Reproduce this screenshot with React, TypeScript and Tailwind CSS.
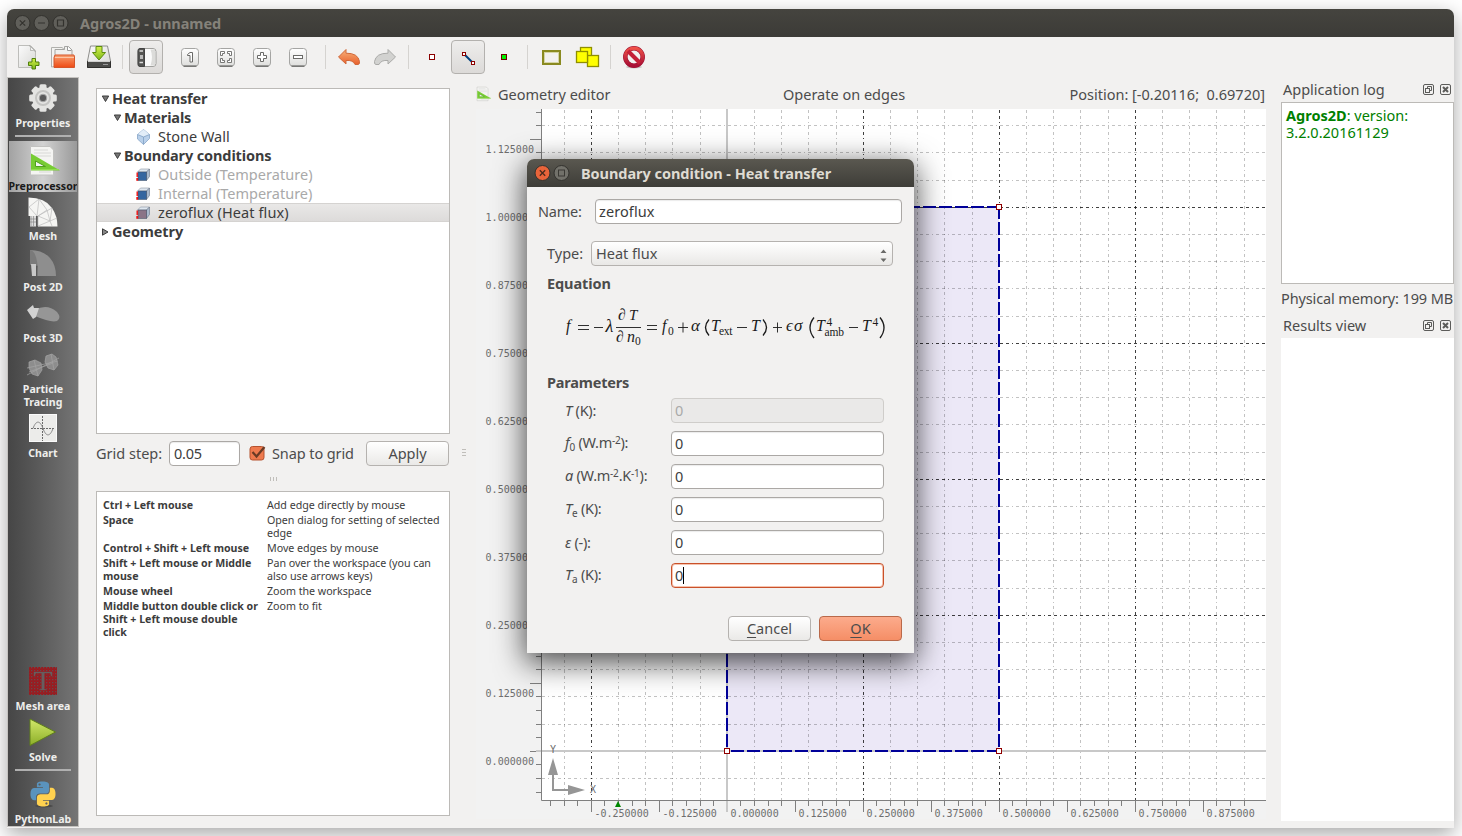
import React, { type ReactNode } from "react";

/* ---------- toolbar ---------- */

function ToolIcon({ children, className = "w-[36px]" }: { children: ReactNode; className?: string }) {
  return (
    <div className={`flex h-[34px] shrink-0 items-center justify-center ${className}`}>
      <svg width="34" height="34" viewBox="-17 -17 34 34">{children}</svg>
    </div>
  );
}

function Pressed({ children, className }: { children: ReactNode; className: string }) {
  return (
    <div className={`flex h-[34px] w-[34px] shrink-0 items-center justify-center rounded-[4px] border border-[#b3b1ae] bg-gradient-to-b from-[#eeedec] to-[#dcdad8] ${className}`}>
      <svg width="32" height="32" viewBox="-16 -16 32 32">{children}</svg>
    </div>
  );
}

function Divider({ className = "" }: { className?: string }) {
  return <div className={`mx-[5px] h-6 w-px shrink-0 bg-[#d5d3d0] ${className}`} />;
}

function Key({ children }: { children: ReactNode }) {
  return (
    <ToolIcon>
      <rect x="-8.5" y="-8.5" width="17" height="17.5" rx="3" fill="url(#key)" stroke="#a5a5a3" />
      <path d="M-6.5 9.2H6.5" stroke="#6f6f6d" strokeWidth="1.4" />
      {children}
    </ToolIcon>
  );
}

function Toolbar() {
  return (
    <div className="flex h-10 items-center pl-[4px]">
      <ToolIcon className="w-[34px]">
        <defs>
          <linearGradient id="key" x2="0" y2="1"><stop offset="0" stopColor="#fff" /><stop offset="1" stopColor="#dededc" /></linearGradient>
          <linearGradient id="paper" x2="1" y2="1"><stop offset="0" stopColor="#fbfbfb" /><stop offset="1" stopColor="#d8d8d6" /></linearGradient>
          <linearGradient id="folder" x2="0" y2="1"><stop offset="0" stopColor="#f9a070" /><stop offset="1" stopColor="#ee4a14" /></linearGradient>
          <linearGradient id="undo" x2="0" y2="1"><stop offset="0" stopColor="#f7b27a" /><stop offset="1" stopColor="#e8602c" /></linearGradient>
          <linearGradient id="no" x2="0" y2="1"><stop offset="0" stopColor="#ee5048" /><stop offset="1" stopColor="#a80f35" /></linearGradient>
          <linearGradient id="green" x2="0" y2="1"><stop offset="0" stopColor="#d5f04a" /><stop offset="1" stopColor="#7cb81a" /></linearGradient>
        </defs>
        <path d="M-9.5 -11.5H2.5L7.5 -6.5V10.5H-9.5Z" fill="url(#paper)" stroke="#bdbdba" />
        <path d="M1.5 -11.5Q3.500 -9.500 2.500 -6.500Q5.500 -7.500 7.5 -5.5Z" fill="#fff" stroke="#a5a5a2" strokeWidth=".8" />
        <path d="M4 1.500h3.500v3.500h3.500v3.500h-3.500v3.500h-3.500v-3.500H.5v-3.500h3.500Z" fill="url(#green)" stroke="#4f7f0c" />
      </ToolIcon>
      <ToolIcon>
        <path d="M-11.500 10V-9.500H-1L3 -6V8Z" fill="#f3f3f1" stroke="#b0b0ad" />
        <path d="M-8 8V-7.500H1.500V-10.500H5.500L9 -7V6Z" fill="#f0f0ee" stroke="#a5a5a2" />
        <path d="M4.500 -10.500V-6.500H8.500" fill="#fff" stroke="#999" />
        <path d="M-9 0.500L-8 -2H11L11.500 0V10.500H-9Z" fill="url(#folder)" stroke="#d5562a" />
        <path d="M-8 0.500H11" stroke="#fcc6a6" />
      </ToolIcon>
      <ToolIcon>
        <path d="M-8.500 -11H8.500L11.500 4V10.500H-11.500V4Z" fill="url(#paper)" stroke="#8e8e8b" />
        <path d="M-11.500 4.500H11.500V10.500H-11.500Z" fill="#4c4c4a" stroke="#2f2f2d" />
        <path d="M-11 4.500H11" stroke="#d0d0ce" />
        <path d="M4 7.500H9" stroke="#999" />
        <path d="M-3 -10.500H3V-4.500H6.500L0 3L-6.500 -4.500H-3Z" fill="url(#green)" stroke="#5c8c10" />
      </ToolIcon>
      <Divider className="mr-[6px]" />
      <Pressed className="mr-[9px]">
        <rect x="-8" y="-8.500" width="18" height="18" rx="3" fill="#fafafa" stroke="#a0a09d" />
        <path d="M-6 -8.500H-1.500V9.500H-6Q-8 9.500 -8 7.500V-6.500Q-8 -8.500 -6 -8.500Z" fill="#555553" stroke="#444" />
        <path d="M-6.500 -6H-3M-6.500 5.500H-3" stroke="#ddd" strokeWidth="1.500" />
        <rect x="-6" y="-2" width="3" height="4" fill="#bbb" />
        <path d="M4.500 -7.500H9V8.500H4.500Q7.500 0 4.500 -7.500" fill="#dcdcda" />
      </Pressed>
      <Key>
        <path d="M-2.500 -2.500L0 -4.500H2.500V5H0V-1.500H-2.500Z" fill="#fff" stroke="#6a6a68" />
      </Key>
      <Key>
        <path d="M-5.500 -1.500V-5.500H-1.500V-3.500H-3.500V-1.500ZM5.500 -1.500V-5.500H1.500V-3.500H3.500V-1.500ZM-5.500 1.500V5.500H-1.500V3.500H-3.500V1.500ZM5.500 1.500V5.500H1.500V3.500H3.500V1.500Z" fill="#fff" stroke="#6a6a68" strokeWidth=".9" />
      </Key>
      <Key>
        <path d="M-1.500 -4.500H1.500V-1.500H4.500V1.500H1.500V4.500H-1.500V1.500H-4.500V-1.500H-1.500Z" fill="#fff" stroke="#6a6a68" />
      </Key>
      <Key>
        <rect x="-4.500" y="-1.500" width="9" height="3" fill="#fff" stroke="#6a6a68" />
      </Key>
      <Divider className="ml-[9px]" />
      <ToolIcon>
        <path d="M-10.500 0L-3 -7.500V-3.800Q9 -4 10.500 4.500Q10.800 7.500 9 7.500H6Q4 2.800 -3 3.500V7Z" fill="url(#undo)" stroke="#d0683a" strokeLinejoin="round" />
      </ToolIcon>
      <ToolIcon>
        <path d="M10.500 0L3 -7.500V-3.800Q-9 -4 -10.500 4.500Q-10.800 7.500 -9 7.500H-6Q-4 2.800 3 3.500V7Z" fill="#d2d2d0" stroke="#aaaaa8" strokeLinejoin="round" />
      </ToolIcon>
      <Divider />
      <ToolIcon><rect x="-2.500" y="-2.500" width="5" height="5" fill="#fff" stroke="#8b0000" /></ToolIcon>
      <Pressed className="mx-px">
        <path d="M-4 -3L5 6" stroke="#00407f" strokeWidth="2" />
        <rect x="-5.500" y="-4.500" width="3" height="3" fill="#fff" stroke="#8b0000" />
        <rect x="3.500" y="4.500" width="3" height="3" fill="#fff" stroke="#8b0000" />
      </Pressed>
      <ToolIcon><rect x="-2.500" y="-2.500" width="5" height="5" fill="#00f000" stroke="#6b0000" /></ToolIcon>
      <Divider />
      <ToolIcon>
        <rect x="-8" y="-6" width="17" height="13" fill="#f2f1f0" stroke="#8a8a20" strokeWidth="2" />
        <rect x="-6.500" y="-4.500" width="14" height="10" fill="none" stroke="#d5d5a5" />
      </ToolIcon>
      <ToolIcon>
        <g fill="#ffff00" stroke="#8f8f00" strokeWidth="1.300">
          <rect x="-6.500" y="-9.500" width="11" height="10" />
          <rect x="0.500" y="-1.500" width="11" height="11" />
          <rect x="-10.500" y="-5.500" width="11" height="11" />
        </g>
      </ToolIcon>
      <Divider />
      <ToolIcon>
        <ellipse cx="0" cy="10" rx="8" ry="1.500" fill="#c8c6c4" />
        <circle r="8.700" fill="none" stroke="#9c1030" strokeWidth="4.500" />
        <circle r="8.700" fill="none" stroke="url(#no)" strokeWidth="3.500" />
        <path d="M-6 -6L6 6" stroke="#c42038" strokeWidth="4" />
      </ToolIcon>
    </div>
  );
}

/* ---------- mode bar ---------- */

function Mode({ label, children, className = "h-[51px] text-[#eeeeec]", low }: { label: ReactNode; children: ReactNode; className?: string; low?: boolean }) {
  return (
    <div className={`mx-px flex flex-col items-center overflow-hidden ${className}`}>
      <svg className="shrink-0" width="68" height={low ? 39 : 38} viewBox={low ? "-34 -20 68 39" : "-34 -20 68 38"}>{children}</svg>
      <div className="whitespace-nowrap text-center text-[10.600px] font-bold leading-[13px]">{label}</div>
    </div>
  );
}

const PY =
  "M14.25.18l.9.2.73.26.59.3.45.32.34.34.25.34.16.33.1.3.04.26.02.2-.01.13V8.5l-.05.63-.13.55-.21.46-.26.38-.3.31-.33.25-.35.19-.35.14-.33.1-.3.07-.26.04-.21.02H8.770l-.69.05-.59.14-.5.22-.41.27-.33.32-.27.35-.2.36-.15.37-.1.35-.07.32-.04.27-.02.21v3.060H3.170l-.21-.03-.28-.07-.32-.12-.35-.18-.36-.26-.36-.36-.35-.46-.32-.59-.28-.73-.21-.88-.14-1.050-.05-1.230.06-1.220.16-1.040.24-.87.32-.71.36-.57.4-.44.42-.33.42-.24.4-.16.36-.1.32-.05.24-.01h.16l.06.01h8.160v-.83H6.180l-.01-2.750-.02-.37.05-.34.11-.31.17-.28.25-.26.31-.23.38-.2.44-.18.51-.15.58-.12.64-.1.71-.06.77-.04.84-.02 1.270.05zm-6.300 1.980l-.23.33-.08.41.08.41.23.34.33.22.41.09.41-.09.33-.22.23-.34.08-.41-.08-.41-.23-.33-.33-.22-.41-.09-.41.09z";

function Ruler({ small }: { small?: boolean }) {
  return (
    <g transform={small ? "scale(.48)" : undefined}>
      <path d="M-12.500 -14.500H7L10.500 -11V14H-12.500Z" fill="#f4f4f2" stroke="#c2c2c0" />
      <path d="M-9 -11H5M-9 -8H8M-9 -5H8M-4 11H8M2 7H8" stroke="#d8d8d6" />
      <path d="M-12 -7.500V9.500H17Z" fill="#77cc33" />
      <path d="M-7.500 0V5.500H2.500Z" fill="#f4f4f2" stroke="#4f9f1d" />
      <path d="M-12 8.500H16" stroke="#8fdf4d" />
    </g>
  );
}

const TEETH = [0, 45, 90, 135];

function ModeBar() {
  return (
    <div className="flex h-[750px] w-[72px] shrink-0 flex-col border border-[#c4c2bf] bg-gradient-to-r from-[#464646] to-[#757575]">
      <Mode label="Properties" low className="h-[52px] text-[#eeeeec]">
        <g fill="#e4e4e2">
          {TEETH.map((a) => (
            <rect key={a} x="-3.500" y="-13.800" width="7" height="27.600" rx="1.500" transform={`rotate(${a})`} />
          ))}
          <circle r="11" />
        </g>
        <circle r="7" fill="none" stroke="#c4c4c2" strokeWidth="2" />
        <circle r="3.800" fill="#5a5a5a" stroke="#aaa" />
      </Mode>
      <div className="mx-[7px] mb-[4px] mt-[5px] h-[2px] bg-[#b0b0b0]" />
      <Mode className="h-[51px] bg-gradient-to-r from-[#a2a2a2] via-[#d2d2d2] to-[#999999] text-[#1a1a1a]" label="Preprocessor" low>
        <Ruler />
      </Mode>
      <Mode label="Mesh">
        <path d="M-14.500 -14.500Q2 -14.500 9 -4Q14.500 4 14.500 14.500H-5V4H-14.500Z" fill="#f5f5f3" />
        <path d="M-13 4V14.500H-7V4Z" fill="#ddd" />
        <path d="M-12 4V14M-9.500 4V14M-13 7H-7M-13 10H-7" stroke="#888" strokeWidth=".7" />
        <path d="M-14 -5L-4 -13L-6 4L-14 -5M-4 -13L4 -2L-5 4L9 -4L7 9L4 -2M7 9L-5 14L-5 4L7 9L14 6M7 9L9 14" fill="none" stroke="#bbb" strokeWidth=".7" />
      </Mode>
      <Mode label="Post 2D">
        <path d="M-13 -13Q0 -13 7 -5Q13 2 13 13H-5V3L-13 0Z" fill="#8e8e8e" />
        <path d="M-13 -13Q-5 -12 -5 13H-6V2H-13Z" fill="#7a7a7a" />
        <path d="M-12 1H-7V13H-11Z" fill="#c8c8c8" />
      </Mode>
      <Mode label="Post 3D">
        <path d="M-8 -4Q4 -11 14 -2Q19 4 14 7Q8 9 -8 2Z" fill="#969696" />
        <path d="M-16 -4L-10 -9L-9 -6H-4L-7 3L-10 5Z" fill="#d2d2d2" />
      </Mode>
      <Mode className="h-[64px] text-[#eeeeec]" label={<>Particle<br />Tracing</>}>
        <g fill="#8d8d8d" stroke="#a5a5a5" strokeWidth=".7">
          <path d="M-14 -3L-8 -5L-2 -2L-1 5L-5 11L-11 9L-14 3Z" />
          <path d="M3 -9L9 -11L13 -8L15 0L11 5L5 3L2 -3Z" />
          <path d="M-16 10L16 -7M-16 3L15 -4M-14 7L10 -2M-9 -5L-5 11M8 -11L11 5" fill="none" />
        </g>
      </Mode>
      <Mode label="Chart">
        <g transform="translate(0 -1)">
          <rect x="-13.500" y="-13.500" width="27" height="27" fill="#ececea" stroke="#fafafa" />
          <path d="M-12 .5H12M-.5 -12V13" stroke="#6a6a6a" strokeDasharray="2 1" />
          <path d="M-10 0.500C-7 -8 -3 -8 0 0.500S7 9 10 0.500" fill="none" stroke="#888" />
        </g>
      </Mode>
      <div className="flex-1" />
      <Mode label="Mesh area">
        <defs>
          <pattern id="noise" width="3" height="3" patternUnits="userSpaceOnUse">
            <rect width="3" height="3" fill="#a3151b" />
            <rect width="1.300" height="1.300" fill="#5c5050" />
            <rect x="1.600" y="1.600" width="1" height="1" fill="#6a3a3c" />
          </pattern>
        </defs>
        <rect x="-14" y="-15" width="28" height="28" fill="url(#noise)" />
        <path d="M-9.500 -10.500H9.500V-5.500H8L7 -8.500H1.800V7H4V8.500H-4V7H-1.800V-8.500H-7L-8 -5.500H-9.500Z" fill="#665e5f" stroke="#8f2024" strokeWidth=".6" />
      </Mode>
      <Mode label="Solve">
        <defs>
          <linearGradient id="solve" x2="0" y2="1"><stop offset="0" stopColor="#d2e86a" /><stop offset="1" stopColor="#8cae28" /></linearGradient>
        </defs>
        <path d="M-13 -14L12.500 -1L-13 12.500Z" fill="url(#solve)" stroke="#5f7f1a" />
      </Mode>
      <div className="mx-[7px] mb-[4px] mt-[5px] h-[2px] bg-[#b0b0b0]" />
      <Mode label="PythonLab">
        <ellipse cx="1" cy="11" rx="9" ry="1.500" fill="#4a4a4a" />
        <g transform="translate(-12.500 -13.500) scale(1.040)">
          <path d={PY} fill="#5a93bd" fillRule="evenodd" />
          <path d={PY} fill="#ffd14f" fillRule="evenodd" transform="rotate(180 12 12)" />
        </g>
      </Mode>
    </div>
  );
}

/* ---------- left panel ---------- */

function Arrow({ open }: { open: boolean }) {
  return (
    <svg className="mr-[3px] shrink-0" width="8" height="8" viewBox="0 0 8 8">
      {open ? <path d="M1.300 1H7.700L4.500 6.500Z" fill="#777" stroke="#3c3c3c" /> : <path d="M1.500 .8V7.200L7 4Z" fill="#888" stroke="#3c3c3c" />}
    </svg>
  );
}

function Cube({ front }: { front: string }) {
  return (
    <svg className="mr-[8px] shrink-0" width="14" height="14" viewBox="0 0 14 14">
      <path d="M1.500 4L4.500 1H13.500L10.500 4Z" fill="#dfe7f0" stroke="#8a93a3" strokeWidth=".6" />
      <path d="M10.500 4L13.500 1V8.500L10.500 12.500Z" fill="#a9b9cd" stroke="#6a7384" strokeWidth=".6" />
      <path d="M2 4H10.500V12.500H2Z" fill={front} stroke="#3d4a60" strokeWidth=".5" />
      <path d="M1.200 4.500V9" stroke="#f01010" strokeWidth="1.400" />
      <path d="M1.200 10V12.800" stroke="#f01010" strokeWidth="1.800" />
    </svg>
  );
}

const bold = "font-bold tracking-[-0.130px]";
const input = "flex h-[25px] items-center rounded-[4px] border border-[#aba8a5] bg-white px-[3px] text-[#3c3c3c] shadow-[inset_0_1px_1px_rgba(0,0,0,0.08)]";
const row = "flex h-[19px] items-center whitespace-nowrap";
const button = "flex h-[25px] items-center justify-center rounded-[4px] border";

const HELP: [string, string][] = [
  ["Ctrl + Left mouse", "Add edge directly by mouse"],
  ["Space", "Open dialog for setting of selected\nedge"],
  ["Control + Shift + Left mouse", "Move edges by mouse"],
  ["Shift + Left mouse or Middle\nmouse", "Pan over the workspace (you can\nalso use arrows keys)"],
  ["Mouse wheel", "Zoom the workspace"],
  ["Middle button double click or\nShift + Left mouse double\nclick", "Zoom to fit"],
];

function LeftPanel() {
  return (
    <div className="ml-[17px] flex w-[354px] shrink-0 flex-col pt-[11px]">
      <div className="h-[346px] border border-[#bcbab7] bg-white text-[#3c3c3c]">
        <div className={`${row} ${bold} pl-[4px]`}><Arrow open />Heat transfer</div>
        <div className={`${row} ${bold} pl-[16px]`}><Arrow open />Materials</div>
        <div className={`${row} pl-[39px]`}>
          <svg className="mr-[7px] shrink-0" width="15" height="16" viewBox="0 0 15 16">
            <path d="M7.500 .5L13.500 5.500V9.500L7.500 15.500L1.500 10V5.500Z" fill="#b9d0ea" stroke="#86a4c6" strokeWidth=".8" />
            <path d="M7.500 .5L13.500 5.500L7.500 8L1.500 5.500Z" fill="#e2edf8" />
            <path d="M1.500 5.500L7.500 8L13.500 5.500M7.500 8V15.500" fill="none" stroke="#7f9fc4" strokeWidth=".8" />
          </svg>
          Stone Wall
        </div>
        <div className={`${row} ${bold} pl-[16px]`}><Arrow open />Boundary conditions</div>
        <div className={`${row} pl-[39px] tracking-[0.050px] text-[#a9a9a9]`}><Cube front="#3566a0" />Outside (Temperature)</div>
        <div className={`${row} pl-[39px] text-[#a9a9a9]`}><Cube front="#3566a0" />Internal (Temperature)</div>
        <div className={`${row} border-y border-[#d5d3d1] bg-gradient-to-b from-[#e9e8e7] to-[#dddbda] pl-[39px] tracking-[0.1px]`}><Cube front="#8b7487" />zeroflux (Heat flux)</div>
        <div className={`${row} ${bold} pl-[4px]`}><Arrow open={false} />Geometry</div>
      </div>
      <div className="mt-[7px] flex h-[25px] items-center whitespace-nowrap">
        <span className="w-[73px]">Grid step:</span>
        <div className={`${input} w-[71px] !px-[4px] tracking-[-0.2px]`}>0.05</div>
        <svg className="ml-[9px]" width="18" height="17" viewBox="0 0 18 17">
          <rect x="1" y="1.500" width="14" height="13.500" rx="2.500" fill="#ee7a4e" stroke="#b5522f" />
          <path d="M3.500 7L7.500 11.500L15.500 2" fill="none" stroke="#6a3a24" strokeWidth="2.200" />
        </svg>
        <span className="ml-[5px] w-[94px] tracking-[-0.1px]">Snap to grid</span>
        <div className={`${button} w-[83px] border-[#b5b2af] bg-gradient-to-b from-white to-[#eae9e7]`}>Apply</div>
      </div>
      <div className="flex h-[25px] items-center justify-center gap-[2px]">
        <i className="h-[4px] w-px bg-[#c0beba]" />
        <i className="h-[4px] w-px bg-[#c0beba]" />
        <i className="h-[4px] w-px bg-[#c0beba]" />
      </div>
      <div className="h-[325px] border border-[#bcbab7] bg-white pl-[6px] pt-[7px] text-[10.700px] leading-[13px] text-[#3c3c3c]">
        {HELP.map(([k, v]) => (
          <div key={k} className="mb-[2px] flex whitespace-pre">
            <div className="w-[164px] text-[10.600px] font-bold">{k}</div>
            <div className="tracking-[-0.030px]">{v}</div>
          </div>
        ))}
      </div>
    </div>
  );
}

/* ---------- geometry plot ---------- */

const X0 = 727;
const Y0 = 751;
const STEP = 27.2;
const range = (a: number, b: number) => Array.from({ length: b - a + 1 }, (_, i) => a + i);
const px = (v: number) => Math.floor(v + 0.3) + 0.5;

function Plot() {
  return (
    <svg className="block" width="796" height="719" viewBox="470 109 796 719">
      <rect x="476" y="109" width="790" height="710" fill="#f2f2f2" />
      <rect x="541" y="109" width="725" height="692" fill="#fff" />
      <rect x="727" y="207" width="272" height="544" fill="#ece8f7" />
      <g stroke="#000" strokeDasharray="3 3 1 3 3 3" fill="none">
        {range(-6, 19).filter((k) => k !== 0).map((k) => (
          <path key={k} d={`M${px(X0 + k * STEP)} 801V109`} strokeOpacity={k % 5 ? 0.24 : 0.75} />
        ))}
        {range(-1, 23).filter((k) => k !== 0).map((k) => (
          <path key={k} d={`M542 ${px(Y0 - k * STEP)}H1266`} strokeOpacity={k % 5 ? 0.24 : 0.75} />
        ))}
      </g>
      <path d="M536 751H1266M727 109V812" stroke="#c8c8c8" strokeWidth="2" />
      <g stroke="#7f7f7f">
        <path d="M541.500 109V800.500H1266" fill="none" />
        {range(-3, 47).filter((k) => k !== 0).map((k) => (
          <path key={k} d={`M${k % 5 ? 536 : 530} ${px(Y0 - k * 13.6)}H541`} />
        ))}
        <path d="M530 751.500H536" />
        {range(-13, 38).filter((k) => k !== 0).map((k) => (
          <path key={k} d={`M${px(X0 + k * 13.6)} 801V${k % 5 ? 806 : 812}`} />
        ))}
      </g>
      <g fill="#6e6e6e" fontFamily="DejaVu Sans Mono" fontSize="10">
        {range(0, 9).map((k) => (
          <text key={k} x="485.500" y={Y0 - k * 68 + 14} textLength="48.500">{(k * 0.125).toFixed(6)}</text>
        ))}
        {range(-2, 7).map((k) => (
          <text key={k} x={X0 + k * 68 + 3.500} y="817">{(k * 0.125).toFixed(6)}</text>
        ))}
        <text x="550" y="753">Y</text>
        <text x="590" y="793">X</text>
      </g>
      <path d="M727 751V207H999" fill="none" stroke="#000099" strokeWidth="2" strokeDasharray="13 3" strokeDashoffset="-4" />
      <path d="M999 751V207M727 751H999" fill="none" stroke="#000099" strokeWidth="2" strokeDasharray="13 3" strokeDashoffset="-4" />
      {[[727, 207], [999, 207], [727, 751], [999, 751]].map(([x, y]) => (
        <rect key={`${x}-${y}`} x={x - 2.5} y={y - 2.5} width="5" height="5" fill="#fff" stroke="#900000" />
      ))}
      <path d="M615 807L618 801L621 807Z" fill="#008800" />
      <g fill="#969696">
        <path d="M553 790V772M552 790H570" stroke="#969696" strokeWidth="2" />
        <path d="M553 758L558 775H548ZM585 790L568 785V795Z" />
      </g>
    </svg>
  );
}

/* ---------- docks ---------- */

function DockTitle({ children }: { children: ReactNode }) {
  return (
    <div className="flex h-[25px] items-center pl-[2px] pr-[2px]">
      <span className="flex-1 whitespace-nowrap">{children}</span>
      <svg width="29" height="12" viewBox="0 0 29 12" fill="none" stroke="#5c5c5a">
        <rect x=".5" y=".5" width="10" height="10" rx="1.500" />
        <rect x="2.500" y="4.500" width="4" height="4" />
        <path d="M4.500 4V2.500H8.500V6.500H7" />
        <rect x="17.500" y=".5" width="10" height="10" rx="1.500" />
        <path d="M20 3L25 8M25 3L20 8" strokeWidth="2" />
      </svg>
    </div>
  );
}

/* ---------- dialog ---------- */

function Equation() {
  return (
    <svg className="block" width="340" height="60" viewBox="557 298 340 60" fill="#1a1a1a" fontFamily="Liberation Serif" fontSize="16">
      <g fontStyle="italic">
        <text x="566" y="331">f</text>
        <text x="605.500" y="331.500" fontSize="18">λ</text>
        <text x="618" y="320">∂</text>
        <text x="629" y="320" fontSize="15">T</text>
        <text x="616" y="342">∂</text>
        <text x="627" y="342">n</text>
        <text x="662" y="331">f</text>
        <text x="691" y="331" fontSize="17">α</text>
        <text x="711" y="331">T</text>
        <text x="751" y="331">T</text>
        <text x="786" y="331" fontSize="17">ϵ</text>
        <text x="794" y="331" fontSize="17">σ</text>
        <text x="816" y="331">T</text>
        <text x="862" y="331">T</text>
      </g>
      <g fontSize="11.500">
        <text x="635" y="345">0</text>
        <text x="668" y="335">0</text>
        <text x="719" y="335" textLength="13.500">ext</text>
        <text x="824.500" y="336" textLength="19.500">amb</text>
        <text x="826.500" y="326">4</text>
        <text x="872.500" y="326">4</text>
      </g>
      <g stroke="#1a1a1a" fill="none">
        <path d="M578 325.500H589M578 329.500H589M594 327.500H603M616 327.500H641M647 325.500H657M647 329.500H657M678 327.500H688M683 322.500V332.500M737 327.500H747M773 327.500H782M777.500 322.500V332.500M849 327.500H858" strokeWidth=".9" />
        <path d="M709 319.500Q702 327.500 709 335.500M763 319.500Q770 327.500 763 335.500M814 317.500Q806 327.500 814 338M880 317.500Q888 327.500 880 338" strokeWidth="1.300" />
      </g>
    </svg>
  );
}

function Paren() {
  return null;
}

const it = "italic";
const sub = "relative top-[3px] text-[10px]";
const sup = "relative top-[-4px] text-[10px] tracking-[-0.2px]";

const PARAMS: { label: ReactNode; state?: "disabled" | "focus" }[] = [
  { label: <><i className={it}>T</i> (K):</>, state: "disabled" },
  { label: <><i className={it}>f</i><span className={sub}>0</span> (W.m<span className={sup}>-2</span>):</> },
  { label: <><i className={it}>a</i> (W.m<span className={sup}>-2</span>.K<span className={sup}>-1</span>):</> },
  { label: <><i className={it}>T</i><span className={sub}>e</span> (K):</> },
  { label: <><i className={it}>ε</i> (-):</> },
  { label: <><i className={it}>T</i><span className={sub}>a</span> (K):</>, state: "focus" },
];

function Dialog() {
  return (
    <div className="absolute left-[527px] top-[159px] flex h-[494px] w-[387px] flex-col rounded-t-[7px] bg-[#f2f1f0] shadow-[0_8px_30px_2px_rgba(0,0,0,0.7)]">
      <div className="flex h-[28px] shrink-0 items-center rounded-t-[7px] bg-gradient-to-b from-[#5a5850] to-[#3e3d38] pl-[7px]">
        <svg width="38" height="18" viewBox="0 0 38 18">
          <circle cx="8.500" cy="9" r="7.500" fill="#e9643a" stroke="#33322e" />
          <path d="M5.800 6.300L11.200 11.700M11.200 6.300L5.800 11.700" stroke="#4a2a1c" strokeWidth="1.300" />
          <circle cx="27.500" cy="9" r="7.500" fill="#72716a" stroke="#33322e" />
          <rect x="24.500" y="6" width="6" height="6" fill="none" stroke="#3a3934" />
        </svg>
        <span className="ml-[9px] whitespace-nowrap font-bold tracking-[-0.050px] text-[#dfdbd2]">Boundary condition - Heat transfer</span>
      </div>
      <div className="mt-3 flex h-[25px] items-center pl-[11px]">
        <span className="w-[57px] tracking-[-0.2px]">Name:</span>
        <div className={`${input} w-[307px] tracking-[0.1px]`}>zeroflux</div>
      </div>
      <div className="mt-[17px] flex h-[25px] items-center pl-5">
        <span className="w-[44px]">Type:</span>
        <div className={`${button} w-[302px] !justify-between border-[#b5b2af] bg-gradient-to-b from-white to-[#e9e8e6] pl-[4px] pr-[5px]`}>
          Heat flux
          <svg width="7" height="18" viewBox="0 0 7 18" fill="#6a6a68"><path d="M.5 8L3.500 4.500L6.500 8ZM.5 13.500L3.500 17L6.500 13.500Z" /></svg>
        </div>
      </div>
      <div className="mt-[7px] h-5 pl-5 font-bold leading-5 tracking-[-0.1px]">Equation</div>
      <div className="mt-[5px] pl-[30px]"><Equation /></div>
      <div className="mt-[14px] h-5 pl-5 font-bold leading-5 tracking-[-0.2px]">Parameters</div>
      <div className="mt-[6px] flex flex-col gap-2 pl-[38px]">
        {PARAMS.map((p, i) => (
          <div key={i} className="flex h-[25px] items-center whitespace-nowrap">
            <span className="w-[106px] tracking-[-0.250px]">{p.label}</span>
            {p.state === "disabled" ? (
              <div className="flex h-[25px] w-[213px] items-center rounded-[4px] border border-[#cfcdca] bg-[#eae9e8] px-[3px] text-[#a9a9a9]">0</div>
            ) : p.state === "focus" ? (
              <div className="flex h-[25px] w-[213px] items-center rounded-[4px] border border-[#c9512a] bg-white px-[3px] text-[#3c3c3c] shadow-[inset_0_0_0_1px_#f6c3ae]">0<i className="h-[17px] w-px bg-black" /></div>
            ) : (
              <div className={`${input} w-[213px]`}>0</div>
            )}
          </div>
        ))}
      </div>
      <div className="mt-[28px] flex justify-end gap-2 pr-3">
        <div className={`${button} w-[83px] border-[#b5b2af] bg-gradient-to-b from-white to-[#eae9e7]`}><span><u className="underline-offset-[3px]">C</u>ancel</span></div>
        <div className={`${button} w-[83px] border-[#b9694a] bg-gradient-to-b from-[#fcab8c] to-[#f58e66]`}><span><u className="underline-offset-[3px]">O</u>K</span></div>
      </div>
    </div>
  );
}

export default function App() {
  return (
    <div className="relative h-[836px] w-[1462px] overflow-hidden bg-white px-[7px] pt-[9px] font-['Noto_Sans','Open_Sans',sans-serif] text-[14.500px] leading-[19px] text-[#4c4c4c]">
      <div className="h-[819px] w-[1447px] rounded-t-[7px] bg-[#f2f1f0] shadow-[0_6px_20px_rgba(0,0,0,0.35)]">
        <div className="flex h-[28px] items-center rounded-t-[7px] bg-gradient-to-b from-[#45443f] to-[#3c3b37] pl-[7px]">
          <svg width="58" height="18" viewBox="0 0 58 18">
            <g fill="#605f5a" stroke="#33322e">
              <circle cx="8.500" cy="9" r="7.500" /><circle cx="27.500" cy="9" r="7.500" /><circle cx="46.500" cy="9" r="7.500" />
            </g>
            <path d="M5.800 6.300L11.200 11.700M11.200 6.300L5.800 11.700M24 9H31M43.500 6H49.500V12H43.500Z" fill="none" stroke="#33322e" strokeWidth="1.200" />
          </svg>
          <span className="ml-[8px] whitespace-nowrap font-bold tracking-[-0.030px] text-[#85827a]">Agros2D - unnamed</span>
        </div>
        <Toolbar />
        <div className="flex">
          <ModeBar />
          <LeftPanel />
          <div className="flex w-[20px] shrink-0 flex-col items-center gap-[2px] pl-[7px] pt-[372px]">
            <i className="h-px w-[4px] bg-[#c0beba]" />
            <i className="h-px w-[4px] bg-[#c0beba]" />
            <i className="h-px w-[4px] bg-[#c0beba]" />
          </div>
          <div className="w-[796px] shrink-0">
            <div className="flex h-[32px] items-center whitespace-nowrap pt-[2px]">
              <svg className="ml-[6px]" width="16" height="16" viewBox="-7 -8 16 16"><Ruler small /></svg>
              <span className="ml-[6px] w-[285px]">Geometry editor</span>
              <span className="flex-1">Operate on edges</span>
              <span className="mr-px whitespace-pre">Position: [-0.20116;  0.69720]</span>
            </div>
            <Plot />
          </div>
          <div className="ml-[15px] w-[173px] shrink-0">
            <DockTitle>Application log</DockTitle>
            <div className="h-[182px] border border-[#bcbab7] bg-white pl-[4px] pt-[4px] leading-[17px] text-[#008000]">
              <b>Agros2D</b>: version:<br />
              <span>3.2.0.20161129</span>
            </div>
            <div className="mt-[5px] h-[19px] whitespace-nowrap tracking-[-0.120px]">Physical memory: 199 MB</div>
            <div className="mt-[5px]"><DockTitle>Results view</DockTitle></div>
            <div className="h-[483px] bg-white" />
          </div>
        </div>
      </div>
      <Dialog />
    </div>
  );
}
